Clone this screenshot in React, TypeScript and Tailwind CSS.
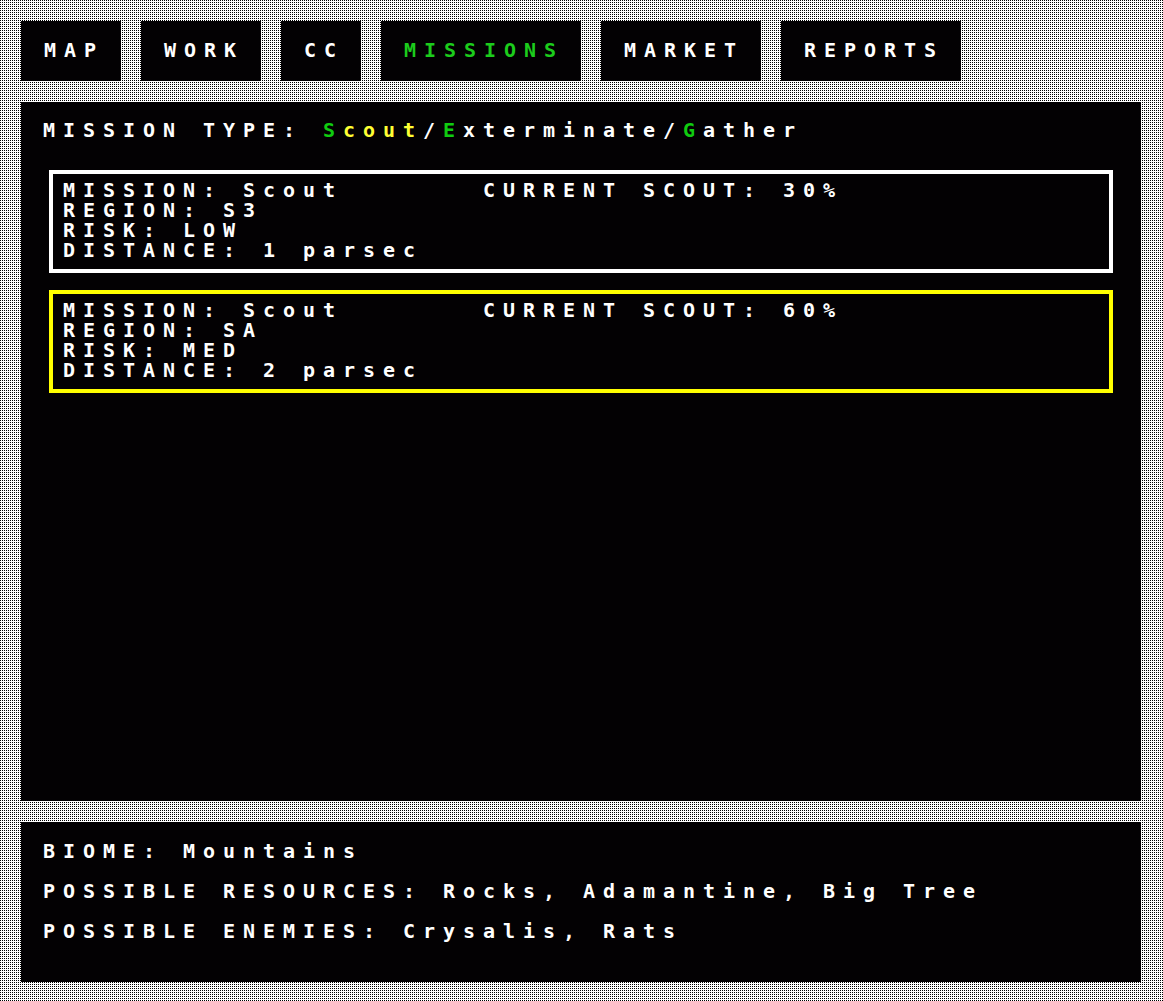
const tabs = [
  { label: "MAP", width: "w-[100px]" },
  { label: "WORK", width: "w-[120px]" },
  { label: "CC", width: "w-[80px]" },
  { label: "MISSIONS", width: "w-[200px]", active: true },
  { label: "MARKET", width: "w-[160px]" },
  { label: "REPORTS", width: "w-[180px]" },
];

const missions = [
  { region: "S3", risk: "LOW", distance: "1", scout: "30%", border: "border-white" },
  { region: "SA", risk: "MED", distance: "2", scout: "60%", border: "border-[#ffff00]" },
];

function Line({ children, className = "" }: { children: React.ReactNode; className?: string }) {
  return <div className={`h-5 whitespace-pre leading-5 ${className}`}>{children}</div>;
}

export default function App() {
  return (
    <div className="flex h-[1001px] w-[1163px] flex-col bg-white bg-[image:conic-gradient(at_1px_1px,#fff_75%,#000_0)] bg-[length:2px_2px] pt-[21px] pl-[21px] pr-[22px] font-['DejaVu_Sans_Mono',monospace] text-[20px] font-bold tracking-[7.96px] text-white">
      <nav className="flex h-[60px] gap-5">
        {tabs.map((tab) => (
          <div
            key={tab.label}
            className={`flex items-center bg-[#030103] pb-[2px] pl-[23px] ${tab.width} ${tab.active ? "text-[#1ccc1c]" : "text-white"}`}
          >
            <Line>{tab.label}</Line>
          </div>
        ))}
      </nav>

      <main className="mt-[21px] h-[699px] bg-[#030103] pt-[18px] pr-5 pl-[22px]">
        <Line>
          MISSION TYPE: <span className="text-[#10cc10]">S</span>
          <span className="text-[#ffff33]">cout</span>/<span className="text-[#10cc10]">E</span>
          xterminate/<span className="text-[#10cc10]">G</span>ather
        </Line>
        <div className="mt-[30px] mr-2 ml-[6px] flex flex-col gap-[17px]">
          {missions.map((m) => (
            <div key={m.region} className={`h-[103px] border-4 ${m.border} pt-[6px] pl-[10px]`}>
              <Line>{`MISSION: Scout       CURRENT SCOUT: ${m.scout}`}</Line>
              <Line>{`REGION: ${m.region}`}</Line>
              <Line>{`RISK: ${m.risk}`}</Line>
              <Line>{`DISTANCE: ${m.distance} parsec`}</Line>
            </div>
          ))}
        </div>
      </main>

      <footer className="mt-[21px] flex h-[160px] flex-col gap-5 bg-[#030103] pt-[19px] pr-5 pl-[22px]">
        <Line>BIOME: Mountains</Line>
        <Line>POSSIBLE RESOURCES: Rocks, Adamantine, Big Tree</Line>
        <Line>POSSIBLE ENEMIES: Crysalis, Rats</Line>
      </footer>
    </div>
  );
}
